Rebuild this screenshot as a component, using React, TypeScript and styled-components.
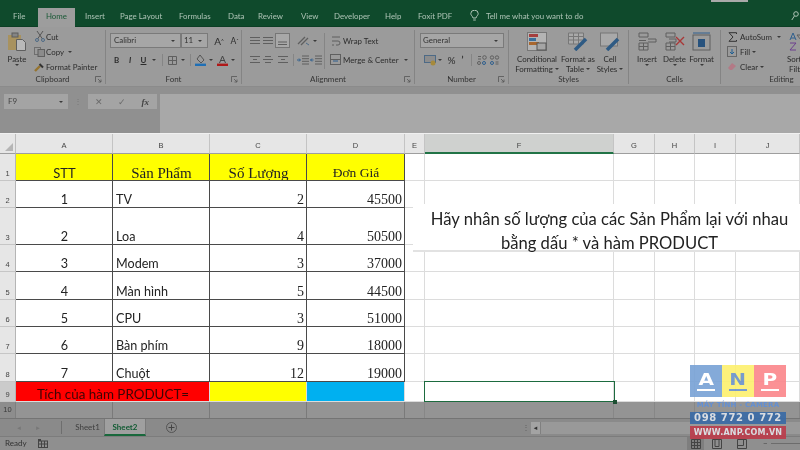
import React from "react";
import styled, { createGlobalStyle } from "styled-components";

const Global = createGlobalStyle`
  html, body { margin: 0; padding: 0; width: 800px; height: 450px; overflow: hidden; background: #fff; }
  * { box-sizing: border-box; }
`;
const Frame = styled.div`
  position: relative; width: 800px; height: 450px; overflow: hidden; filter: blur(.3px);
  display: flex; flex-direction: column; font-family: Lato, "Open Sans", sans-serif; color: #2e2e2e;
`;
const TabBar = styled.div`
  height: 27px; flex: none; background: #0f4a2c; display: flex; align-items: flex-end; padding-left: 13px; font-size: 7.9px; color: #aec4b6;
  border-bottom: 1px solid #0c3f25;
`;
const Tab = styled.div<{ $w: number; $active?: boolean }>`
  width: ${p => p.$w}px; height: 18px; line-height: 17px; flex: none; white-space: nowrap;
  ${p => p.$active && "background:#9d9d9d;color:#1b5a37;text-align:center;margin-right:10px;height:19px;margin-bottom:-1px;"}
`;
const TitleBit = styled.div`
  position: absolute; left: 711px; top: 0; width: 37px; height: 2px; background: #a9a9a9;
`;
const Ribbon = styled.div`
  height: 59px; flex: none; background: #9b9b9b; display: flex; align-items: flex-start; padding-top: 3px; font-size: 7.9px; color: #2c2c2c; overflow: hidden;
`;
const Group = styled.div<{ $w: number }>`
  width: ${p => p.$w}px; flex: none; height: 54px; display: flex; flex-direction: column; border-right: 1px solid #848484;
`;
const GroupBody = styled.div`
  height: 44px; display: flex; flex: none; white-space: nowrap; line-height: 10px;
`;
const GroupName = styled.div`
  position: relative; height: 10px; line-height: 10px; text-align: center; font-size: 8px; color: #343434;
`;
const Launcher = styled.svg`
  position: absolute; right: 3px; top: 2px;
`;
const Stack = styled.div<{ $x?: number; $w?: number; $pt?: number }>`
  display: flex; flex-direction: column; flex: none; margin-left: ${p => p.$x ?? 0}px; ${p => p.$w && `width:${p.$w}px;`} padding-top: ${p => p.$pt ?? 0}px;
`;
const Row = styled.div<{ $h?: number; $mt?: number; $x?: number }>`
  display: flex; align-items: center; height: ${p => p.$h ?? 15}px; margin-top: ${p => p.$mt ?? 0}px; margin-left: ${p => p.$x ?? 0}px; flex: none;
`;
const Slot = styled.div<{ $w: number; $weight?: number; $size?: number }>`
  width: ${p => p.$w}px; flex: none; display: flex; justify-content: center; align-items: center; font-weight: ${p => p.$weight ?? 400};
  ${p => p.$size && `font-size:${p.$size}px;`}
`;
const Caret = styled.span`
  display: inline-block; width: 0; height: 0; border: 2px solid transparent; border-top: 2.5px solid #3a3a3a; border-bottom: 0;
`;
const Sep = styled.div<{ $h?: number }>`
  width: 1px; height: ${p => p.$h ?? 12}px; background: #858585;
`;
const VRule = styled.div<{ $x: number }>`
  width: 1px; height: 36px; margin: 3px ${p => p.$x}px 0; background: #858585; flex: none;
`;
const Field = styled.div<{ $w: number; $pad?: number }>`
  width: ${p => p.$w}px; height: 15px; flex: none; border: 1px solid #7a7a7a; background: #a6a6a6; font-size: 7.9px; line-height: 13px;
  padding: 0 5px 0 ${p => p.$pad ?? 2}px; color: #333; display: flex; align-items: center; justify-content: space-between;
`;
const Big = styled.div<{ $w: number }>`
  width: ${p => p.$w}px; flex: none; display: flex; flex-direction: column; align-items: center; padding-top: 2px;
`;
const BigIcon = styled.svg`
  flex: none; margin-bottom: 3px;
`;
const BigLabel = styled.div`
  text-align: center; line-height: 10px; display: flex; align-items: center; gap: 2px; justify-content: center;
`;
const FormulaArea = styled.div`
  height: 47px; flex: none; background: #909090; display: flex; padding: 7px 0 0 4px; align-items: flex-start;
  border-top: 1px solid #8b8b8b;
`;
const NameBox = styled.div`
  width: 64px; height: 15px; flex: none; background: #a4a4a4; font-size: 8px; line-height: 15px; padding: 0 5px 0 4px; color: #444;
  display: flex; align-items: center; justify-content: space-between;
`;
const Dots = styled.div`
  width: 20px; flex: none; text-align: center; color: #777; font-size: 8px; line-height: 15px;
`;
const FxBox = styled.div`
  width: 69px; height: 15px; flex: none; background: #a4a4a4; display: flex; align-items: center; justify-content: space-between;
  font-size: 9px; color: #6a6a6a; padding: 0 8px 0 7px;
  i { font-family: "Liberation Serif", serif; font-weight: 700; color: #444; }
`;
const FormulaInput = styled.div`
  flex: 1; height: 40px; margin-left: 3px; background: #a8a8a8;
`;
const Sheet = styled.div`
  flex: none; border-top: 1px solid #f0f0f0; background: #fff; display: grid; height: 285px;
  grid-template-columns: 16px 97px 97px 97px 98px 20px 189px 41px 40px 41px 64px;
  grid-template-rows: 20px 27px 27px 37px 27px 28px 27px 27px 28px 20px 16px;
`;
const Corner = styled.div`
  background: #e6e6e6; border-right: 1px solid #bdbdbd; border-bottom: 1px solid #9e9e9e; position: relative;
  &::after { content: ""; position: absolute; right: 2px; bottom: 2px; border-style: solid; border-width: 0 0 8px 8px; border-color: transparent transparent #b5b5b5 transparent; }
`;
const ColHead = styled.div<{ $sel?: boolean }>`
  background: ${p => (p.$sel ? "#cfd1cf" : "#e6e6e6")}; font: 7.5px/24px "Liberation Sans", sans-serif; color: #444; text-align: center;
  border-right: 1px solid #c4c4c4; height: 20px; overflow: hidden;
  border-bottom: ${p => (p.$sel ? "2px solid #217346" : "1px solid #9e9e9e")};
`;
const RowHead = styled.div<{ $sel?: boolean }>`
  background: ${p => (p.$sel ? "#cbcbcb" : "#e6e6e6")}; font: 7.5px "Liberation Sans", sans-serif; color: #444;
  display: flex; align-items: flex-end; justify-content: center; padding-bottom: 2px;
  border-bottom: 1px solid #c6c6c6; border-right: 1px solid #b5b5b5;
`;
const Cell = styled.div<{ $bg?: string; $serif?: boolean; $size?: number; $align?: string; $strong?: boolean; $color?: string; $span?: number }>`
  background: ${p => p.$bg || "#fff"}; font-family: ${p => (p.$serif ? '"Liberation Serif", serif' : 'Lato, "Open Sans", sans-serif')}; font-size: ${p => p.$size || 12.6}px;
  color: ${p => p.$color || "#232323"}; white-space: nowrap; overflow: hidden;
  display: flex; align-items: flex-end; justify-content: ${p => (p.$align === "center" ? "center" : p.$align === "right" ? "flex-end" : "flex-start")};
  padding: 0 2px 0 3px; line-height: 14px;
  ${p => p.$span && `grid-column: span ${p.$span};`}
  border-right: 1px solid ${p => (p.$strong ? "#4a4a4a" : "#dcdcdc")};
  border-bottom: 1px solid ${p => (p.$strong ? "#4a4a4a" : "#dcdcdc")};
`;
const DimHead = styled.div`
  background: #8d8d8d; font: 7.5px/15px "Liberation Sans", sans-serif; color: #3a3a3a; text-align: center; border-right: 1px solid #7f7f7f;
`;
const DimCell = styled.div<{ $strong?: boolean }>`
  background: #949494; border-right: 1px solid ${p => (p.$strong ? "#7a7a7a" : "#878787")};
`;
const Footer = styled.div`
  flex: none; height: 32px; background: #8c8c8c; font-size: 8px; color: #333; display: flex; flex-direction: column;
`;
const SheetTabs = styled.div`
  height: 19px; display: flex; align-items: stretch; border-top: 1px solid #747474; background: #8a8a8a; border-bottom: 1px solid #7c7c7c;
`;
const Nav = styled.div`
  width: 62px; flex: none; display: flex; align-items: center; padding-left: 16px; gap: 13px; color: #777; font-size: 6px; border-right: 1px solid #6e6e6e; margin: 2px 0;
`;
const STab = styled.div<{ $active?: boolean; $w: number }>`
  width: ${p => p.$w}px; flex: none; text-align: center; line-height: 16px; font-size: 8px; color: ${p => (p.$active ? "#0f5a31" : "#3f3f3f")}; font-weight: ${p => (p.$active ? 700 : 400)};
  ${p => p.$active && "background:#9f9f9f; border-bottom:2px solid #19683c; border-left:1px solid #7a7a7a; border-right:1px solid #7a7a7a;"}
`;
const PlusBtn = styled.svg`
  margin: 3px 0 0 20px; flex: none;
`;
const HScrollDots = styled.div`
  margin-left: 344px; width: 10px; flex: none; text-align: center; font-size: 8px; line-height: 16px; color: #5e5e5e;
`;
const HScroll = styled.div`
  flex: 1; margin: 3px 0 2px; background: #999; display: flex; align-items: center; font-size: 6px; color: #333; 
`;
const HScrollBtn = styled.div`
  width: 10px; height: 100%; background: #a3a3a3; text-align: center; line-height: 11px; border-right: 1px solid #808080;
`;
const Status = styled.div`
  height: 13px; padding-left: 5px; display: flex; align-items: center; line-height: 13px; background: #8f8f8f; font-size: 8px; color: #333;
`;
const StatusViews = styled.div`
  margin-left: auto; display: flex; align-items: center; height: 13px; flex: none;
`;
const ViewBtn = styled.div<{ $on?: boolean }>`
  width: ${p => (p.$on ? 17 : 25)}px; height: 13px; display: flex; align-items: center; justify-content: center; background: ${p => (p.$on ? "#7e7e7e" : "transparent")};
`;
const Zoom = styled.div`
  width: 37px; flex: none; margin-left: 9px; display: flex; align-items: center; gap: 3px; color: #444; font-size: 8px;
  &::after { content: ""; flex: 1; height: 1px; background: #6c6c6c; }
`;
const Note = styled.div`
  position: absolute; left: 413px; top: 204px; width: 387px; height: 48px; background: #fff; color: #222;
  font: 16.6px/24px Lato, "Open Sans", sans-serif; text-align: center; border-bottom: 2px solid #e2e2e2; padding: 3px 0 0 6px;
`;
const Selected = styled.div`
  position: absolute; left: 424px; top: 381px; width: 191px; height: 21px; border: 1.5px solid #1d6b3f;
  &::after { content: ""; position: absolute; right: -3px; bottom: -3px; width: 4px; height: 4px; background: #1d4f33; }
`;
const Logo = styled.div`
  position: absolute; left: 690px; top: 365px; width: 96px; display: flex; flex-direction: column; align-items: stretch; opacity: .92;
`;
const LogoRow = styled.div`display: flex; height: 32px;`;
const LogoCell = styled.div<{ $bg: string; $c: string }>`
  flex: 1; position: relative; background: ${p => p.$bg}; color: ${p => p.$c}; font: 700 16px/29px "DejaVu Sans", sans-serif; text-align: center;
  span { display: inline-block; transform: scaleX(1.25); }
  &::after { content: ""; position: absolute; left: 7px; right: 7px; top: 24px; height: 1.5px; background: ${p => p.$c}; }
`;
const LogoSub = styled.div`
  height: 15px; font: 700 7px/17px "DejaVu Sans", sans-serif; color: #5f8fd8; text-align: center; white-space: nowrap; letter-spacing: .2px;
`;
const LogoBar = styled.div<{ $bg: string; $size: number; $h: number; $track: number }>`
  height: ${p => p.$h}px; background: ${p => p.$bg}; color: #dfe3e8; margin-bottom: 2px; letter-spacing: ${p => p.$track}px;
  font: 700 ${p => p.$size}px/${p => p.$h}px "DejaVu Sans", sans-serif; text-align: center; white-space: nowrap; overflow: hidden;
`;

const L = "#5f5f5f";
const Cv = ({ w, h, children }: { w: number; h: number; children: React.ReactNode }) => (
  <svg width={w} height={h} viewBox={`0 0 ${w} ${h}`} fill="none" style={{ flex: "none" }}>{children}</svg>
);
const LauncherIco = () => (
  <Launcher width="7" height="7" viewBox="0 0 7 7" fill="none"><path d="M.5 6V.5H6M3 3l3 3M6 3.5V6H3.5" stroke="#555" strokeWidth=".8" /></Launcher>
);
const Lines = ({ rows }: { rows: number[] }) => (
  <Cv w={10} h={9}>
    <path d={rows.map((o, i) => `M${o} ${1.5 + i * 3}H${10 - o}`).join("")} stroke={L} />
  </Cv>
);
const GridIco = () => (
  <Cv w={9} h={9}><path d="M.5.5h8v8h-8zM4.5.5v8M.5 4.5h8" stroke={L} /></Cv>
);

const colLetters = ["A", "B", "C", "D", "E", "F", "G", "H", "I", "J"];
const rows = [
  ["1", "TV", "2", "45500"],
  ["2", "Loa", "4", "50500"],
  ["3", "Modem", "3", "37000"],
  ["4", "Màn hình", "5", "44500"],
  ["5", "CPU", "3", "51000"],
  ["6", "Bàn phím", "9", "18000"],
  ["7", "Chuột", "12", "19000"],
];
const Blanks = () => <>{[0, 1, 2, 3, 4, 5].map(i => <Cell key={i} />)}</>;

export default function App() {
  return (
    <Frame>
      <Global />
      <TitleBit />
      <TabBar>
        <Tab $w={25}>File</Tab>
        <Tab $w={37} $active>Home</Tab>
        <Tab $w={35}>Insert</Tab>
        <Tab $w={59}>Page Layout</Tab>
        <Tab $w={49}>Formulas</Tab>
        <Tab $w={30}>Data</Tab>
        <Tab $w={43}>Review</Tab>
        <Tab $w={33}>View</Tab>
        <Tab $w={51}>Developer</Tab>
        <Tab $w={33}>Help</Tab>
        <Tab $w={52}>Foxit PDF</Tab>
        <Tab $w={16}>
          <svg width="9" height="11" viewBox="0 0 9 11" fill="none" style={{ verticalAlign: "-2px" }}><path d="M3 8C2.600 6 .8 5.500.8 3.600a3.700 3.400 0 0 1 7.400 0C8.200 5.500 6.400 6 6 8zM3.200 10h2.600" stroke="#aec4b6" /></svg>
        </Tab>
        <Tab $w={305}>Tell me what you want to do</Tab>
        <Tab $w={10}>
          <svg width="8" height="10" viewBox="0 0 8 10" fill="none" style={{ verticalAlign: "-2px" }}><circle cx="5" cy="3" r="2.300" stroke="#aec4b6" /><path d="M3.400 5L.8 9" stroke="#aec4b6" /></svg>
        </Tab>
      </TabBar>
      <Ribbon>
        <Group $w={106}>
          <GroupBody>
            <Big $w={34}>
              <BigIcon width="20" height="19" viewBox="0 0 20 19" fill="none">
                <rect x="1" y="3" width="13" height="15" fill="#a8925f" />
                <rect x="5" y="1" width="6" height="4" fill="#858585" stroke="#5c5c5c" />
                <path d="M9.500 7.500h6l3 3v8h-9z" fill="#b9b9b9" stroke="#5f5f5f" />
              </BigIcon>
              <BigLabel>Paste</BigLabel>
              <BigLabel><Caret /></BigLabel>
            </Big>
            <Stack $x={0}>
              <Row $h={13} $mt={0}>
                <Slot $w={11}><Cv w={10} h={11}><path d="M2 0l5.500 8M8 0L2.500 8" stroke="#565656" /><circle cx="2" cy="9" r="1.500" stroke="#4d6a86" /><circle cx="8" cy="9" r="1.500" stroke="#4d6a86" /></Cv></Slot>
                <Slot $w={1} /><span>Cut</span>
              </Row>
              <Row $h={13} $mt={2}>
                <Slot $w={11}><Cv w={11} h={10}><rect x=".5" y=".5" width="6" height="7" stroke="#6f6f6f" /><rect x="4" y="2.500" width="6.500" height="7" fill="#8b8b8b" stroke="#5f5f5f" /></Cv></Slot>
                <Slot $w={1} /><span>Copy</span><Slot $w={12}><Caret /></Slot>
              </Row>
              <Row $h={13} $mt={2}>
                <Slot $w={11}><Cv w={11} h={10}><path d="M1 9l5-5" stroke="#96742f" strokeWidth="2.400" /><path d="M5.500 2l3.500 3.500" stroke="#333" strokeWidth="2" /></Cv></Slot>
                <Slot $w={1} /><span>Format Painter</span>
              </Row>
            </Stack>
          </GroupBody>
          <GroupName>Clipboard<LauncherIco /></GroupName>
        </Group>
        <Group $w={136}>
          <GroupBody>
            <Stack $x={4} $pt={3}>
              <Row>
                <Field $w={71} $pad={3}>Calibri<Caret /></Field>
                <Field $w={27} $pad={2}>11<Caret /></Field>
                <Slot $w={3} />
                <Slot $w={16} $size={10}>A<sup style={{ fontSize: 5 }}>^</sup></Slot>
                <Slot $w={15} $size={8.5}>A<sup style={{ fontSize: 5 }}>ˇ</sup></Slot>
              </Row>
              <Row $h={12} $mt={6}>
                <Slot $w={13} $weight={700}>B</Slot>
                <Slot $w={14} $weight={700}><i>I</i></Slot>
                <Slot $w={13} $weight={700}><u>U</u></Slot>
                <Slot $w={8}><Caret /></Slot>
                <Slot $w={8}><Sep /></Slot>
                <Slot $w={13}><GridIco /></Slot>
                <Slot $w={8}><Caret /></Slot>
                <Slot $w={6}><Sep /></Slot>
                <Slot $w={14}><Cv w={11} h={11}><path d="M5 0l4 5-3 3-4-4z" stroke="#555" /><rect y="8.600" width="11" height="2.400" fill="#1f6fb5" /></Cv></Slot>
                <Slot $w={8}><Caret /></Slot>
                <Slot $w={14}><Cv w={11} h={11}><path d="M2.500 8L5.500 1l3 7M3.600 5.500h4" stroke="#444" /><rect y="8.600" width="11" height="2.400" fill="#b01818" /></Cv></Slot>
                <Slot $w={8}><Caret /></Slot>
              </Row>
            </Stack>
          </GroupBody>
          <GroupName>Font<LauncherIco /></GroupName>
        </Group>
        <Group $w={173}>
          <GroupBody>
            <Stack $x={6} $pt={3}>
              <Row>
                <Slot $w={14}><Lines rows={[0, 0, 0]} /></Slot>
                <Slot $w={12}><Lines rows={[0, 0, 0]} /></Slot>
                <Slot $w={17}><Cv w={15} h={15}><rect x=".5" y=".5" width="14" height="14" fill="#a8a8a8" stroke="#767676" /><path d="M3 9h9M3 11.500h9" stroke={L} /></Cv></Slot>
                <Slot $w={5} />
                <Slot $w={15}><Cv w={13} h={11}><path d="M1 9L8 2M4 10l7-7" stroke={L} strokeWidth="1.300" /><path d="M9 8l3 2" stroke="#4d6a86" /></Cv></Slot>
                <Slot $w={7}><Caret /></Slot>
              </Row>
              <Row $mt={4}>
                <Slot $w={14}><Lines rows={[0, 3, 0]} /></Slot>
                <Slot $w={12}><Lines rows={[2, 0, 2]} /></Slot>
                <Slot $w={17}><Lines rows={[0, 3, 0]} /></Slot>
                <Slot $w={5}><Sep /></Slot>
                <Slot $w={13}><Cv w={12} h={10}><path d="M5 1h7M5 3.700h7M5 6.300h7M5 9h7" stroke={L} /><path d="M0 5h3M2 3.500L3.500 5 2 6.500" stroke="#2e5f8e" /></Cv></Slot>
                <Slot $w={13}><Cv w={12} h={10}><path d="M5 1h7M5 3.700h7M5 6.300h7M5 9h7" stroke={L} /><path d="M3.500 5H.5M2 3.500L.5 5 2 6.500" stroke="#2e5f8e" /></Cv></Slot>
              </Row>
            </Stack>
            <VRule $x={2} />
            <Stack $x={3} $pt={3}>
              <Row>
                <Slot $w={11}><Cv w={10} h={13}><path d="M1 3h8M1 7h6a2 2 0 0 1 0 4H5M1 11h2" stroke={L} /></Cv></Slot>
                <Slot $w={2} />
                <span>Wrap Text</span>
              </Row>
              <Row $mt={4}>
                <Slot $w={11}><Cv w={11} h={11}><rect x=".5" y=".5" width="10" height="10" stroke={L} /><path d="M.5 5.500h10" stroke={L} /><path d="M3 7h5" stroke="#2e5f8e" /></Cv></Slot>
                <Slot $w={2} />
                <span>Merge &amp; Center</span>
                <Slot $w={14}><Caret /></Slot>
              </Row>
            </Stack>
          </GroupBody>
          <GroupName>Alignment<LauncherIco /></GroupName>
        </Group>
        <Group $w={94}>
          <GroupBody>
            <Stack $x={5} $pt={3}>
              <Field $w={84} $pad={2}>General<Caret /></Field>
              <Row $h={14} $mt={5}>
                <Slot $w={3} />
                <Slot $w={14}><Cv w={12} h={11}><rect x=".5" y=".5" width="11" height="7" fill="#8d8d8d" stroke="#4d6a86" /><circle cx="9" cy="8" r="2.500" fill="#a68a3c" /></Cv></Slot>
                <Slot $w={6}><Caret /></Slot>
                <Slot $w={3} />
                <Slot $w={11} $size={10}>%</Slot>
                <Slot $w={11} $size={9} $weight={700}>’</Slot>
                <Slot $w={7}><Sep /></Slot>
                <Slot $w={13}><Cv w={11} h={10}><path d="M2 1.500h3M2 4h3" stroke={L} /><circle cx="8.500" cy="2.500" r="1.800" stroke={L} /><circle cx="3" cy="8" r="1.500" stroke={L} /><circle cx="8" cy="8" r="1.500" stroke="#2e5f8e" /></Cv></Slot>
                <Slot $w={13}><Cv w={11} h={10}><circle cx="3" cy="2.500" r="1.700" stroke={L} /><circle cx="8" cy="2.500" r="1.700" stroke={L} /><circle cx="3" cy="8" r="1.500" stroke="#2e5f8e" /><path d="M6.500 7h3M6.500 9h3" stroke={L} /></Cv></Slot>
              </Row>
            </Stack>
          </GroupBody>
          <GroupName>Number<LauncherIco /></GroupName>
        </Group>
        <Group $w={120}>
          <GroupBody>
            <Stack $x={3} />
            <Big $w={50}>
              <BigIcon width="20" height="19" viewBox="0 0 20 19" fill="none">
                <rect x=".5" y=".5" width="19" height="18" fill="#b4b4b4" stroke="#777" />
                <rect x="2" y="2" width="9" height="3" fill="#a53e3e" /><rect x="2" y="6" width="7" height="3" fill="#3a6f9c" /><rect x="2" y="10" width="10" height="3" fill="#a8672f" />
                <rect x="10" y="11" width="9" height="7" fill="#a5a5a5" stroke="#555" />
              </BigIcon>
              <BigLabel>Conditional</BigLabel>
              <BigLabel>Formatting<Caret /></BigLabel>
            </Big>
            <Big $w={32}>
              <BigIcon width="20" height="19" viewBox="0 0 20 19" fill="none">
                <path d="M.5 1h15v11H.5zM.5 4.500h15M.5 8h15M5.500 1v11M10.500 1v11" fill="#a9a9a9" stroke="#777" />
                <path d="M7 18l11-11" stroke="#2f5b84" strokeWidth="3.500" />
              </BigIcon>
              <BigLabel>Format as</BigLabel>
              <BigLabel>Table<Caret /></BigLabel>
            </Big>
            <Big $w={32}>
              <BigIcon width="20" height="19" viewBox="0 0 20 19" fill="none">
                <rect x=".5" y="1" width="17" height="13" fill="#a9a9a9" stroke="#777" />
                <path d="M7 18l11-11" stroke="#2f5b84" strokeWidth="3.500" />
              </BigIcon>
              <BigLabel>Cell</BigLabel>
              <BigLabel>Styles<Caret /></BigLabel>
            </Big>
          </GroupBody>
          <GroupName>Styles</GroupName>
        </Group>
        <Group $w={92}>
          <GroupBody>
            <Stack $x={4} />
            <Big $w={28}>
              <BigIcon width="19" height="19" viewBox="0 0 19 19" fill="none">
                <path d="M1 1h9v4H1zM1 11h9v7H1zM1 14.500h9M5.500 11v7M10 7h8v3h-8M8 8.500H1" stroke={L} />
              </BigIcon>
              <BigLabel>Insert</BigLabel>
              <BigLabel><Caret /></BigLabel>
            </Big>
            <Big $w={27}>
              <BigIcon width="20" height="19" viewBox="0 0 20 19" fill="none">
                <path d="M1 1h9v4H1zM1 11h9v7H1zM1 14.500h9M5.500 11v7M4 7h7v3H4" stroke={L} />
                <path d="M11 5l8 8M19 5l-8 8" stroke="#a83838" strokeWidth="1.400" />
              </BigIcon>
              <BigLabel>Delete</BigLabel>
              <BigLabel><Caret /></BigLabel>
            </Big>
            <Big $w={27}>
              <BigIcon width="19" height="19" viewBox="0 0 19 19" fill="none">
                <rect x="1" y="3" width="17" height="15" stroke={L} />
                <path d="M1 1h17" stroke="#2e5f8e" />
                <rect x="6" y="7" width="7" height="8" fill="#27527d" />
              </BigIcon>
              <BigLabel>Format</BigLabel>
              <BigLabel><Caret /></BigLabel>
            </Big>
          </GroupBody>
          <GroupName>Cells</GroupName>
        </Group>
        <Group $w={122}>
          <GroupBody>
            <Stack $x={6} $w={59}>
              <Row $h={13}>
                <Slot $w={10}><Cv w={9} h={10}><path d="M8.500 2V.7H1L5 5 1 9.300h7.500V8" stroke="#333" /></Cv></Slot>
                <Slot $w={3} /><span>AutoSum</span><Slot $w={15}><Caret /></Slot>
              </Row>
              <Row $h={13} $mt={2}>
                <Slot $w={10}><Cv w={10} h={11}><rect x=".5" y=".5" width="9" height="10" stroke="#666" /><path d="M5 3v5M3 6l2 2 2-2" stroke="#1f5f93" /></Cv></Slot>
                <Slot $w={3} /><span>Fill</span><Slot $w={7}><Caret /></Slot>
              </Row>
              <Row $h={13} $mt={2}>
                <Slot $w={10}><Cv w={10} h={9}><path d="M1 6l4-5 4 3-4 4H3z" fill="#b37a86" /></Cv></Slot>
                <Slot $w={3} /><span>Clear</span><Slot $w={7}><Caret /></Slot>
              </Row>
            </Stack>
            <Big $w={24}>
              <BigIcon width="19" height="19" viewBox="0 0 19 19" fill="none">
                <path d="M1 8l3-7 3 7M2 6h4" stroke="#2e5f8e" /><path d="M1 11h6l-6 7h6" stroke="#6c3f8e" /><path d="M8 3h11l-4 5v6l-3 1V8z" stroke={L} />
              </BigIcon>
              <BigLabel>Sort &amp;</BigLabel>
              <BigLabel>Filter</BigLabel>
            </Big>
          </GroupBody>
          <GroupName>Editing</GroupName>
        </Group>
      </Ribbon>
      <FormulaArea>
        <NameBox>F9<Caret /></NameBox>
        <Dots>⋮</Dots>
        <FxBox><span>✕</span><span>✓</span><i>fx</i></FxBox>
        <FormulaInput />
      </FormulaArea>
      <Sheet>
        <Corner />
        {colLetters.map(l => <ColHead key={l} $sel={l === "F"}>{l}</ColHead>)}
        <RowHead>1</RowHead>
        <Cell $bg="#ffff00" $strong $size={13} $align="center">STT</Cell>
        <Cell $bg="#ffff00" $strong $serif $size={15} $align="center">Sản Phẩm</Cell>
        <Cell $bg="#ffff00" $strong $serif $size={15} $align="center">Số Lượng</Cell>
        <Cell $bg="#ffff00" $strong $serif $size={13.5} $align="center">Đơn Giá</Cell>
        <Blanks />
        {rows.map((r, i) => (
          <React.Fragment key={r[0]}>
            <RowHead>{i + 2}</RowHead>
            <Cell $strong $align="center">{r[0]}</Cell>
            <Cell $strong>{r[1]}</Cell>
            <Cell $strong $serif $size={14} $align="right">{r[2]}</Cell>
            <Cell $strong $serif $size={14} $align="right">{r[3]}</Cell>
            <Blanks />
          </React.Fragment>
        ))}
        <RowHead $sel>9</RowHead>
        <Cell $bg="#ff0000" $span={2} $size={13.4} $color="#3d0505" $align="center">Tích của hàm PRODUCT=</Cell>
        <Cell $bg="#ffff00" />
        <Cell $bg="#00b0f0" />
        <Blanks />
        <DimHead>10</DimHead>
        <DimCell $strong /><DimCell $strong /><DimCell $strong /><DimCell $strong />
        <DimCell /><DimCell /><DimCell /><DimCell /><DimCell /><DimCell />
      </Sheet>
      <Footer>
        <SheetTabs>
          <Nav><span>◄</span><span>►</span></Nav>
          <Slot $w={9} />
          <STab $w={33}>Sheet1</STab>
          <STab $w={42} $active>Sheet2</STab>
          <PlusBtn width="11" height="11" viewBox="0 0 11 11" fill="none"><circle cx="5.500" cy="5.500" r="5" stroke="#555" /><path d="M5.500 2.500v6M2.500 5.500h6" stroke="#444" /></PlusBtn>
          <HScrollDots>⋮</HScrollDots>
          <HScroll><HScrollBtn>◄</HScrollBtn></HScroll>
        </SheetTabs>
        <Status>
          Ready
          <Slot $w={11} />
          <Cv w={10} h={9}><rect x=".5" y="2" width="9" height="6.500" stroke="#444" /><path d="M.5 5h9M3.500 2v6.500M6.500 2v6.500" stroke="#444" /><rect x="0" y="0" width="3" height="2" fill="#444" /></Cv>
          <StatusViews>
            <ViewBtn $on><Cv w={10} h={10}><path d="M.5.5h9v9h-9zM.5 3.500h9M.5 6.500h9M3.500.5v9M6.500.5v9" stroke="#444" /></Cv></ViewBtn>
            <ViewBtn><Cv w={10} h={10}><path d="M.5.5h9v9h-9zM3 .5v7h4v-7" stroke="#444" /></Cv></ViewBtn>
            <ViewBtn><Cv w={10} h={10}><path d="M.5.5h9v9h-9zM.5 6.500h6V.5" stroke="#444" /></Cv></ViewBtn>
            <Zoom>−</Zoom>
          </StatusViews>
        </Status>
      </Footer>
      <Note>Hãy nhân số lượng của các Sản Phẩm lại với nhau<br />bằng dấu * và hàm PRODUCT</Note>
      <Selected />
      <Logo>
        <LogoRow>
          <LogoCell $bg="#7aa3d6" $c="#fff"><span>A</span></LogoCell>
          <LogoCell $bg="#fdf070" $c="#6d93c9"><span>N</span></LogoCell>
          <LogoCell $bg="#fb888d" $c="#fff"><span>P</span></LogoCell>
        </LogoRow>
        <LogoSub>MÁY TÍNH -  CAMERA</LogoSub>
        <LogoBar $bg="#3a6ba6" $size={10} $h={12} $track={0.6}>098 772 0 772</LogoBar>
        <LogoBar $bg="#bb3d4c" $size={8} $h={13} $track={0.2}>WWW.ANP.COM.VN</LogoBar>
      </Logo>
    </Frame>
  );
}
